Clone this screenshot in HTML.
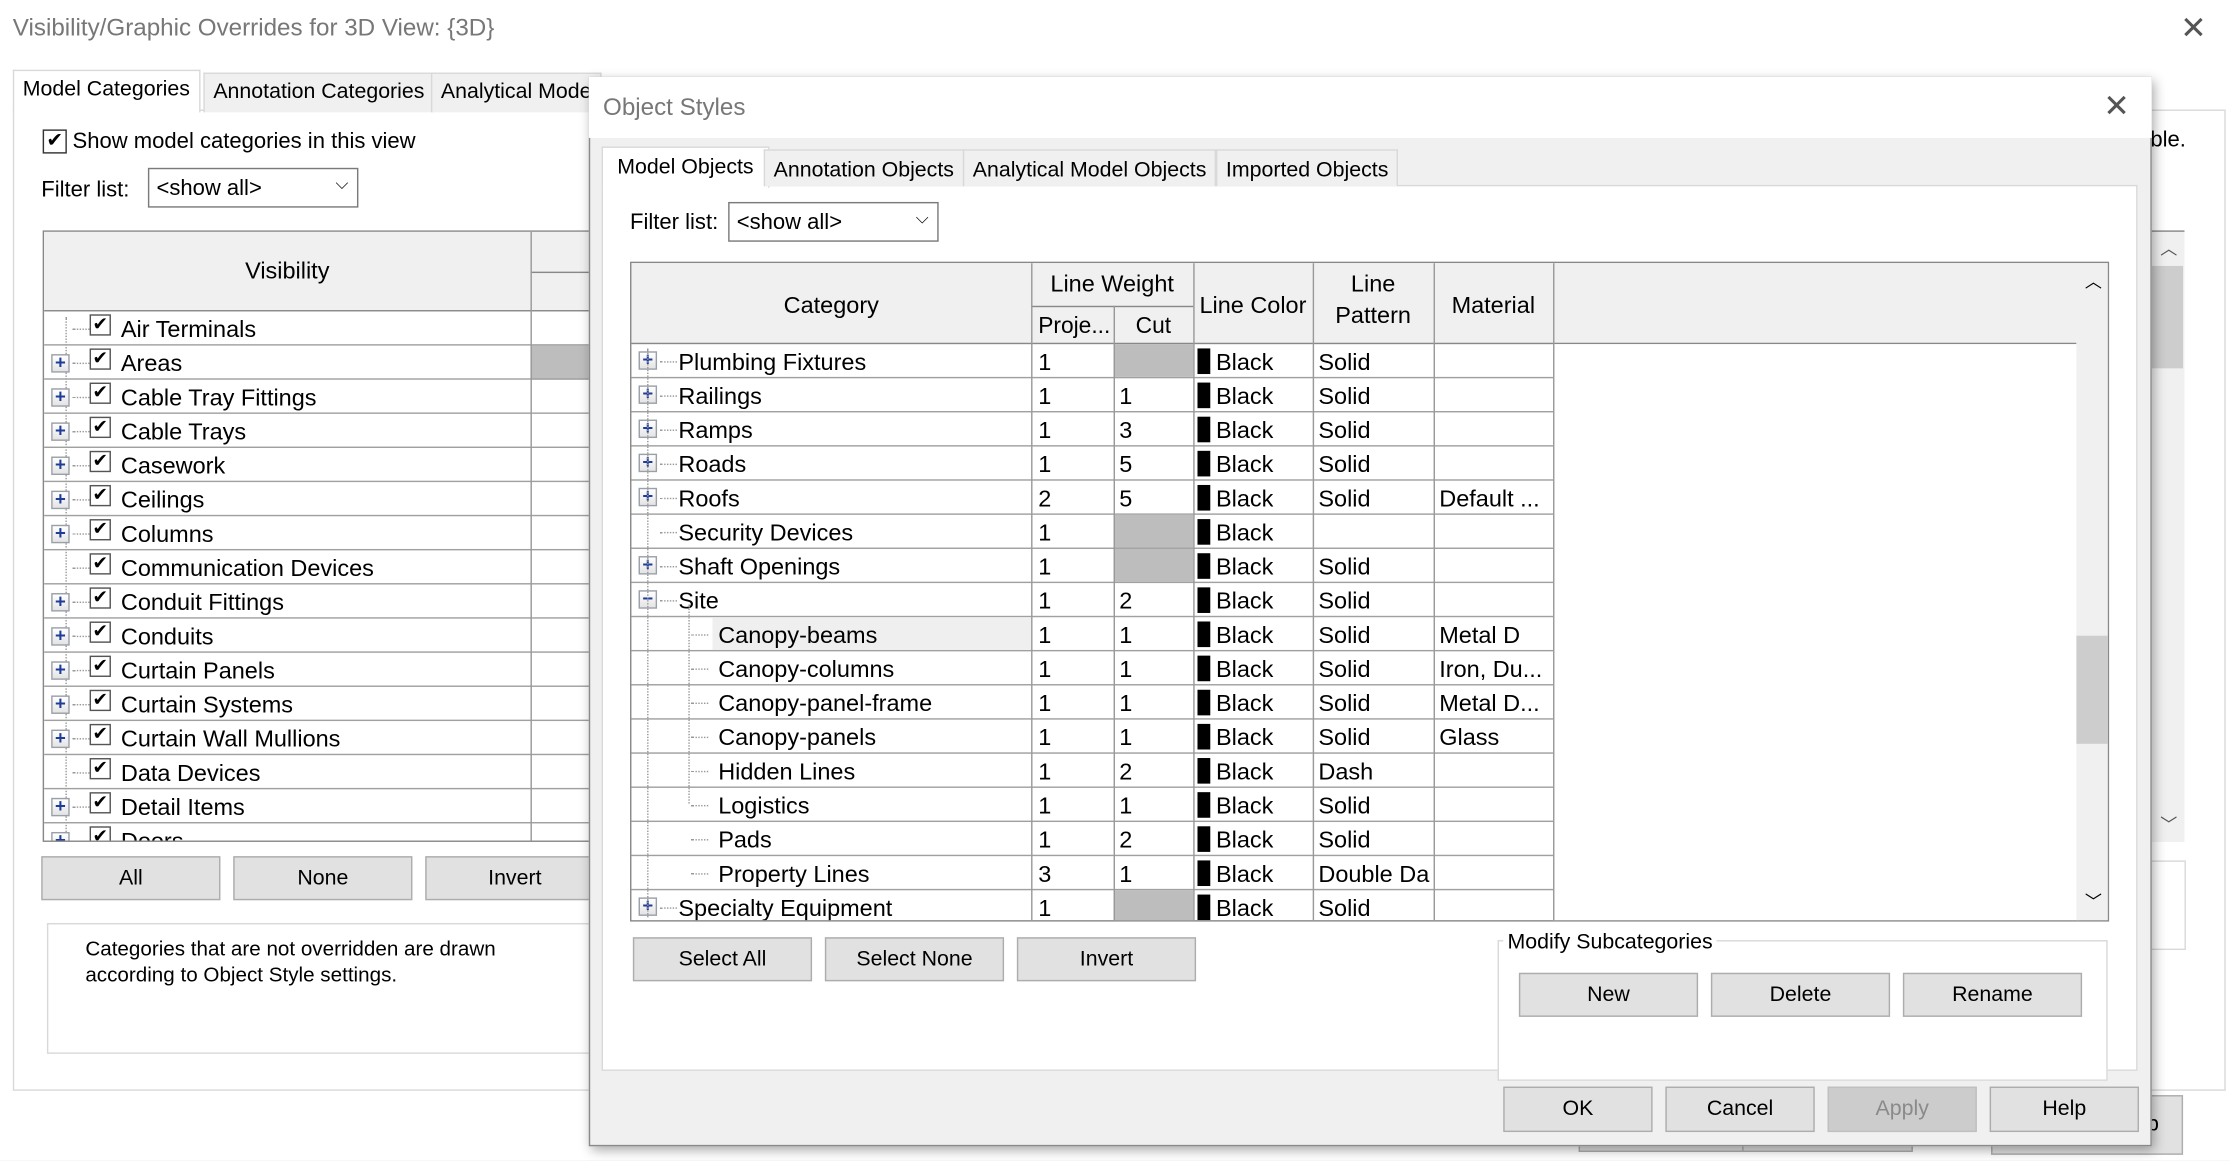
<!DOCTYPE html>
<html><head><meta charset="utf-8"><style>
*{box-sizing:border-box;margin:0;padding:0}
body{width:2230px;height:1161px;overflow:hidden;background:#f0f0f0;font-family:"Liberation Sans",sans-serif;color:#000}
#w{position:absolute;left:0;top:0;width:1568px;height:816px;transform:scale(1.42219);transform-origin:0 0;font-size:15.5px}
.a{position:absolute}
.btn{position:absolute;background:#e1e1e1;border:1px solid #adadad;text-align:center;font-size:15px;line-height:29px;height:31px}
.tab{position:absolute;top:0;height:28px;border:1px solid #d9d9d9;border-bottom:none;background:#f0f0f0;padding:0 6px;line-height:26px;font-size:15px;white-space:nowrap}
.row{position:absolute;left:0;height:24px;border-bottom:1px solid #a0a0a0;width:100%}
.pl{position:absolute;width:13px;height:13px;border:1px solid #9aa0a8;background:linear-gradient(#fff,#e4e4e4);color:#1e3c9a;font-size:13px;line-height:10px;text-align:center;font-weight:bold}
.cb{position:absolute;width:15px;height:15px;border:1px solid #555;background:#fff;font-size:13px;line-height:13px;text-align:center;font-weight:bold;font-family:"DejaVu Sans",sans-serif}
.sw{display:inline-block;width:9px;height:18px;background:#000;vertical-align:-3px;margin-right:4px}
.hatch{background:#bdbdbd}
</style></head><body><div id="w">
<div class="a" style="left:0;top:0;width:1568px;height:816px;background:#fff"></div>
<div class="a" style="left:9px;top:10px;font-size:17px;color:#777">Visibility/Graphic Overrides for 3D View: {3D}</div>
<div class="a" style="left:1533px;top:7px;font-size:22px;color:#555">✕</div>
<div class="a" style="left:9px;top:77px;width:1556px;height:690px;background:#fff;border:1px solid #d9d9d9"></div>
<div class="a" style="left:9px;top:49px;width:420px;height:30px">
<div class="tab" style="left:0;top:0;background:#fff;height:30px">Model Categories</div>
<div class="tab" style="left:134px;top:2px">Annotation Categories</div>
<div class="tab" style="left:294px;top:2px">Analytical Mode</div></div>
<div class="cb" style="left:30px;top:91px;width:17px;height:17px;border-color:#333;font-size:14px;line-height:15px">✔</div>
<div class="a" style="left:51px;top:91px">Show model categories in this view</div>
<div class="a" style="left:29px;top:125px">Filter list:</div>
<div class="a" style="left:104px;top:118px;width:148px;height:28px;border:1px solid #7a7a7a;background:#fff;padding:5px 5px">&lt;show all&gt;<span style="position:absolute;right:6px;top:3px;font-size:12px">⌵</span></div>
<div class="a" style="left:1512px;top:90px">ble.</div>
<div class="a" style="left:1512px;top:162px;width:24px;height:430px;background:#f0f0f0;border-top:1px solid #888"><div class="a" style="left:7px;top:3px;font-size:12px;color:#555">︿</div><div class="a" style="left:1px;top:24px;width:22px;height:72px;background:#cdcdcd"></div><div class="a" style="left:7px;top:408px;font-size:12px;color:#555">﹀</div></div>
<div class="a" style="left:1512px;top:605px;width:25px;height:63px;border:1px solid #d9d9d9;background:#fff"></div>
<div class="a" style="left:30px;top:162px;width:390px;height:430px;border:1px solid #888;overflow:hidden;background:#fff">
<div class="a" style="left:0;top:0;width:390px;height:56px;background:#f0f0f0;border-bottom:1px solid #888"></div>
<div class="a" style="left:0;top:19px;width:342px;text-align:center;font-size:16.5px">Visibility</div>
<div class="a" style="left:342px;top:28px;width:50px;height:1px;background:#888"></div>
<div class="a" style="left:15px;top:60px;width:1px;height:370px;border-left:1px dotted #999"></div>
<div class="a" style="left:342px;top:80px;width:50px;height:24px" ><div class="hatch" style="width:100%;height:100%"></div></div>
<div id="lrows"></div>
</div>
<div class="btn" style="left:29px;top:602px;width:126px">All</div>
<div class="btn" style="left:164px;top:602px;width:126px">None</div>
<div class="btn" style="left:299px;top:602px;width:126px">Invert</div>
<div class="a" style="left:33px;top:649px;width:390px;height:92px;border:1px solid #d9d9d9"></div>
<div class="a" style="left:60px;top:659px;font-size:14.5px;line-height:18px">Categories that are not overridden are drawn<br>according to Object Style settings.</div>
<div class="btn" style="left:1110px;top:790px;width:120px;height:20px"></div>
<div class="btn" style="left:1225px;top:790px;width:120px;height:20px"></div>
<div class="btn" style="left:1400px;top:770px;width:135px;height:42px;line-height:40px;text-align:right;padding-right:16px">p</div>

<div class="a" style="left:414px;top:54px;width:1099px;height:752px;background:#f0f0f0;border:1px solid #8a8a8a;box-shadow:2px 3px 8px rgba(0,0,0,.35)"></div>
<div class="a" style="left:414px;top:54px;width:1099px;height:43px;background:#fff"></div>
<div class="a" style="left:424px;top:66px;font-size:17px;color:#777">Object Styles</div>
<div class="a" style="left:1479px;top:62px;font-size:22px;color:#555">✕</div>
<div class="a" style="left:423px;top:130px;width:1080px;height:623px;background:#fff;border:1px solid #d9d9d9"></div>
<div class="a" style="left:423px;top:103px;width:570px;height:28px">
<div class="tab" style="left:0;top:0;background:#fff;height:29px;padding:0 10px;line-height:28px">Model Objects</div>
<div class="tab" style="left:114px;top:2px;height:26px;line-height:28px">Annotation Objects</div>
<div class="tab" style="left:254px;top:2px;height:26px;line-height:28px">Analytical Model Objects</div>
<div class="tab" style="left:432px;top:2px;height:26px;line-height:28px">Imported Objects</div></div>
<div class="a" style="left:443px;top:148px">Filter list:</div>
<div class="a" style="left:512px;top:142px;width:148px;height:28px;border:1px solid #7a7a7a;background:#fff;padding:5px 5px">&lt;show all&gt;<span style="position:absolute;right:6px;top:3px;font-size:12px">⌵</span></div>

<div class="a" style="left:443px;top:184px;width:1040px;height:464px;border:1px solid #888;overflow:hidden;background:#fff">
<div class="a" style="left:0;top:0;width:1016px;height:57px;background:#f0f0f0;border-bottom:1px solid #888"></div>
<div class="a" style="left:648px;top:57px;width:370px;height:464px;background:#fff"></div>
<div class="a" style="left:0;top:21px;width:281px;text-align:center;font-size:16.5px">Category</div>
<div class="a" style="left:281px;top:6px;width:114px;text-align:center;font-size:16.5px">Line Weight</div>
<div class="a" style="left:281px;top:30px;width:114px;height:1px;background:#888"></div>
<div class="a" style="left:286px;top:36px;font-size:16px">Proje...</div>
<div class="a" style="left:339px;top:36px;width:56px;text-align:center;font-size:16px">Cut</div>
<div class="a" style="left:395px;top:21px;width:84px;text-align:center;font-size:16.5px">Line Color</div>
<div class="a" style="left:479px;top:4px;width:85px;text-align:center;font-size:16.5px;line-height:22px">Line<br>Pattern</div>
<div class="a" style="left:564px;top:21px;width:84px;text-align:center;font-size:16.5px">Material</div>
<div class="a" style="left:1016px;top:0;width:23px;height:464px;background:#f0f0f0"><div class="a" style="left:0;top:262px;width:22px;height:76px;background:#cdcdcd"></div><div class="a" style="left:6px;top:4px;font-size:12px">︿</div><div class="a" style="left:6px;top:440px;font-size:12px">﹀</div></div>
<div id="rrows"></div>
</div>
<div class="btn" style="left:445px;top:659px;width:126px">Select All</div>
<div class="btn" style="left:580px;top:659px;width:126px">Select None</div>
<div class="btn" style="left:715px;top:659px;width:126px">Invert</div>
<div class="a" style="left:1053px;top:661px;width:429px;height:99px;border:1px solid #d9d9d9;background:#fff"></div>
<div class="a" style="left:1057px;top:654px;background:#fff;padding:0 3px;font-size:15px">Modify Subcategories</div>
<div class="btn" style="left:1068px;top:684px;width:126px">New</div>
<div class="btn" style="left:1203px;top:684px;width:126px">Delete</div>
<div class="btn" style="left:1338px;top:684px;width:126px">Rename</div>
<div class="btn" style="left:1057px;top:764px;width:105px;height:32px">OK</div>
<div class="btn" style="left:1171px;top:764px;width:105px;height:32px">Cancel</div>
<div class="btn" style="left:1285px;top:764px;width:105px;height:32px;background:#cccccc;color:#8a8a8a;border-color:#bfbfbf">Apply</div>
<div class="btn" style="left:1399px;top:764px;width:105px;height:32px">Help</div>
</div>
<script>
var L=[["Air Terminals",0],["Areas",1],["Cable Tray Fittings",1],["Cable Trays",1],["Casework",1],["Ceilings",1],["Columns",1],["Communication Devices",0],["Conduit Fittings",1],["Conduits",1],["Curtain Panels",1],["Curtain Systems",1],["Curtain Wall Mullions",1],["Data Devices",0],["Detail Items",1],["Doors",1]];
var h="";L.forEach(function(r,i){var t=56+24*i;h+='<div class="row" style="top:'+t+'px"></div>'+(r[1]?'<div class="pl" style="left:5px;top:'+(t+6)+'px">+</div>':'')+'<div class="a" style="left:20px;top:'+(t+12)+'px;width:12px;border-top:1px dotted #999"></div><div class="cb" style="left:32px;top:'+(t+2)+'px">✔</div><div class="a" style="left:54px;top:'+(t+4)+'px;font-size:16.5px">'+r[0]+'</div>';});
h+='<div class="a" style="left:342px;top:0;width:1px;height:430px;background:#999"></div>';
document.getElementById("lrows").innerHTML=h;
var R=[["Plumbing Fixtures",1,"1","","Solid",""],["Railings",1,"1","1","Solid",""],["Ramps",1,"1","3","Solid",""],["Roads",1,"1","5","Solid",""],["Roofs",1,"2","5","Solid","Default ..."],["Security Devices",0,"1","","",""],["Shaft Openings",1,"1","","Solid",""],["Site",2,"1","2","Solid",""],["Canopy-beams",3,"1","1","Solid","Metal D"],["Canopy-columns",3,"1","1","Solid","Iron, Du..."],["Canopy-panel-frame",3,"1","1","Solid","Metal D..."],["Canopy-panels",3,"1","1","Solid","Glass"],["Hidden Lines",3,"1","2","Dash",""],["Logistics",3,"1","1","Solid",""],["Pads",3,"1","2","Solid",""],["Property Lines",3,"3","1","Double Da",""],["Specialty Equipment",1,"1","","Solid",""]];
var g="";R.forEach(function(r,i){var t=57+24*i,sub=r[1]==3,x=sub?61:33;
g+='<div class="a" style="left:0;top:'+(t+23)+'px;width:648px;height:1px;background:#a0a0a0"></div>';
if(i==8)g+='<div class="a" style="left:57px;top:'+t+'px;width:224px;height:23px;background:#efefef"></div>';
if(r[1]==1||r[1]==2)g+='<div class="pl" style="left:5px;top:'+(t+5)+'px">'+(r[1]==1?'+':'−')+'</div>';
g+='<div class="a" style="left:'+(sub?42:20)+'px;top:'+(t+12)+'px;width:12px;border-top:1px dotted #999"></div>';
g+='<div class="a" style="left:'+x+'px;top:'+(t+4)+'px;font-size:16.5px">'+r[0]+'</div>';
g+='<div class="a" style="left:286px;top:'+(t+4)+'px;font-size:16.5px">'+r[2]+'</div>';
if(r[3])g+='<div class="a" style="left:343px;top:'+(t+4)+'px;font-size:16.5px">'+r[3]+'</div>';else g+='<div class="a hatch" style="left:339px;top:'+t+'px;width:56px;height:23px"></div>';
g+='<div class="a" style="left:398px;top:'+(t+3)+'px;font-size:16.5px"><span class="sw"></span>Black</div>';
g+='<div class="a" style="left:483px;top:'+(t+4)+'px;font-size:16.5px">'+r[4]+'</div>';
g+='<div class="a" style="left:568px;top:'+(t+4)+'px;font-size:16.5px">'+r[5]+'</div>';});
[281,339,395,479,564,648].forEach(function(x){g+='<div class="a" style="left:'+x+'px;top:'+(x==339?30:0)+'px;width:1px;height:464px;background:#999"></div>'});
g+='<div class="a" style="left:11px;top:60px;height:400px;border-left:1px dotted #999"></div><div class="a" style="left:40px;top:240px;height:140px;border-left:1px dotted #999"></div>';
document.getElementById("rrows").innerHTML=g;
</script>
</body></html>
